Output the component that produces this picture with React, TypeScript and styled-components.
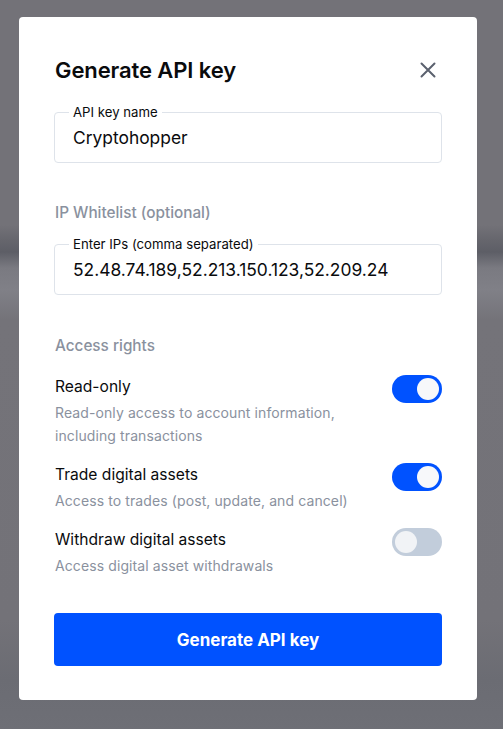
import React, { useState } from 'react';
import styled, { createGlobalStyle } from 'styled-components';

const GlobalStyle = createGlobalStyle`
  html, body {
    margin: 0;
    padding: 0;
  }
  body {
    font-family: Inter, "Noto Sans", "Liberation Sans", sans-serif;
    -webkit-font-smoothing: antialiased;
  }
  * {
    box-sizing: border-box;
  }
`;

const Backdrop = styled.div`
  width: 503px;
  height: 729px;
  padding: 17px 26px 0 19px;
  background: linear-gradient(
    180deg,
    #737278 0px,
    #737278 225px,
    #66666d 240px,
    #5d5e66 252px,
    #7a7a81 268px,
    #808087 290px,
    #747379 320px,
    #737278 620px,
    #6b6c73 680px,
    #6e6f76 729px
  );
`;

const Modal = styled.div`
  width: 458px;
  height: 683px;
  background: #ffffff;
  border-radius: 4px;
  padding: 38px 35px 34px 35px;
  display: flex;
  flex-direction: column;
`;

const Header = styled.div`
  display: flex;
  align-items: center;
  justify-content: space-between;
  height: 30px;
  padding-left: 1px;
`;

const Title = styled.h2`
  margin: 0;
  font-size: 22px;
  font-weight: 600;
  color: #0a0b0d;
  letter-spacing: -0.1px;
`;

const CloseButton = styled.button`
  border: none;
  background: none;
  padding: 0;
  width: 24px;
  height: 24px;
  margin-right: 2px;
  display: flex;
  align-items: center;
  justify-content: center;
  cursor: pointer;
`;

const Field = styled.div<{ $top: number }>`
  position: relative;
  height: 51px;
  margin-top: ${(p) => p.$top}px;
  border: 1px solid #dee3ea;
  border-radius: 4px;
  display: flex;
  align-items: center;
`;

const FieldLabel = styled.span`
  position: absolute;
  top: -9px;
  left: 14px;
  padding: 0 4px;
  background: #ffffff;
  font-size: 13.2px;
  line-height: 16px;
  color: #0a0b0d;
`;

const FieldInput = styled.input`
  width: 100%;
  height: 100%;
  border: none;
  outline: none;
  background: transparent;
  padding: 0 52px 0 18px;
  font-family: inherit;
  font-size: 17.4px;
  color: #0a0b0d;
`;

const SectionLabel = styled.div<{ $top: number }>`
  margin-top: ${(p) => p.$top}px;
  padding-left: 1px;
  font-size: 15.3px;
  line-height: 20px;
  font-weight: 500;
  color: #8a919e;
`;

const RightsList = styled.div`
  margin-top: 19px;
  display: flex;
  flex-direction: column;
  gap: 16px;
`;

const RightRow = styled.div`
  display: flex;
  justify-content: space-between;
  align-items: flex-start;
`;

const RightText = styled.div`
  padding-left: 1px;
  display: flex;
  flex-direction: column;
  gap: 2px;
`;

const RightTitle = styled.div`
  font-size: 15.6px;
  line-height: 24px;
  color: #0a0b0d;
`;

const RightDesc = styled.div`
  font-size: 14px;
  line-height: 23px;
  letter-spacing: 0.1px;
  color: #8a919e;
  max-width: 300px;
`;

const Toggle = styled.button<{ $on: boolean }>`
  flex: none;
  position: relative;
  width: 50px;
  height: 28px;
  border: none;
  border-radius: 14px;
  padding: 0;
  cursor: pointer;
  background: ${(p) => (p.$on ? '#0052ff' : '#c2cddb')};
`;

const Knob = styled.span<{ $on: boolean }>`
  position: absolute;
  top: 3px;
  left: ${(p) => (p.$on ? '25px' : '3px')};
  width: 22px;
  height: 22px;
  border-radius: 50%;
  background: ${(p) => (p.$on ? '#f7f8fa' : '#f1f3f6')};
`;

const PrimaryButton = styled.button`
  margin-top: auto;
  height: 53px;
  width: 100%;
  border: none;
  border-radius: 4px;
  background: #0052ff;
  color: #ffffff;
  font-family: inherit;
  font-size: 17px;
  font-weight: 700;
  cursor: pointer;
`;

type Right = {
  id: string;
  title: string;
  desc: string;
};

const rights: Array<Right> = [
  {
    id: 'read',
    title: 'Read-only',
    desc: 'Read-only access to account information, including transactions',
  },
  {
    id: 'trade',
    title: 'Trade digital assets',
    desc: 'Access to trades (post, update, and cancel)',
  },
  {
    id: 'withdraw',
    title: 'Withdraw digital assets',
    desc: 'Access digital asset withdrawals',
  },
];

const App = (): JSX.Element => {
  const [enabled, setEnabled] = useState<Record<string, boolean>>({
    read: true,
    trade: true,
    withdraw: false,
  });

  return (
    <>
      <GlobalStyle />
      <Backdrop>
        <Modal>
          <Header>
            <Title>Generate API key</Title>
            <CloseButton aria-label="Close">
              <svg width="16" height="16" viewBox="0 0 16 16">
                <path
                  d="M1.5 1.5 L14.5 14.5 M14.5 1.5 L1.5 14.5"
                  stroke="#5b616e"
                  strokeWidth="2"
                  strokeLinecap="round"
                />
              </svg>
            </CloseButton>
          </Header>

          <Field $top={27}>
            <FieldLabel>API key name</FieldLabel>
            <FieldInput defaultValue="Cryptohopper" />
          </Field>

          <SectionLabel $top={40}>IP Whitelist (optional)</SectionLabel>
          <Field $top={21}>
            <FieldLabel>Enter IPs (comma separated)</FieldLabel>
            <FieldInput defaultValue="52.48.74.189,52.213.150.123,52.209.24.41" />
          </Field>

          <SectionLabel $top={41}>Access rights</SectionLabel>
          <RightsList>
            {rights.map(({ id, title, desc }) => {
              const on = enabled[id];
              const onClick = () => setEnabled({ ...enabled, [id]: !on });

              return (
                <RightRow key={id}>
                  <RightText>
                    <RightTitle>{title}</RightTitle>
                    <RightDesc>{desc}</RightDesc>
                  </RightText>
                  <Toggle $on={on} onClick={onClick} aria-pressed={on}>
                    <Knob $on={on} />
                  </Toggle>
                </RightRow>
              );
            })}
          </RightsList>

          <PrimaryButton>Generate API key</PrimaryButton>
        </Modal>
      </Backdrop>
    </>
  );
};

export default App;
